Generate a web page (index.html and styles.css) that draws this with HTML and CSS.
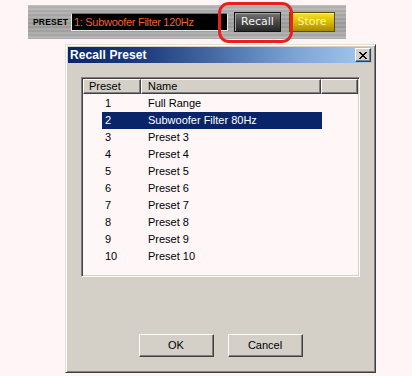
FILE: index.html
```html
<!DOCTYPE html>
<html>
<head>
<meta charset="utf-8">
<link rel="stylesheet" href="styles.css">
</head>
<body>
<div class="page">
  <div class="toolbar-wrap">
    <div class="toolbar">
      <span class="label">PRESET</span>
      <div class="display">1: Subwoofer Filter 120Hz</div>
      <div class="tbtn recall">Recall</div>
      <div class="tbtn store">Store</div>
    </div>
    <div class="ring"></div>
  </div>

  <div class="dialog">
    <div class="titlebar">
      <span class="title">Recall Preset</span>
      <div class="close">
        <svg width="8" height="7" viewBox="0 0 8 7"><path d="M0 0h2v1h-2zM6 0h2v1h-2zM1 1h2v1h-2zM5 1h2v1h-2zM2 2h4v1h-4zM3 3h2v1h-2zM2 4h4v1h-4zM1 5h2v1h-2zM5 5h2v1h-2zM0 6h2v1h-2zM6 6h2v1h-2z" fill="#000"/></svg>
      </div>
    </div>
    <div class="body">
      <div class="list">
        <div class="header">
          <div class="hcell h-preset">Preset</div>
          <div class="hcell h-name">Name</div>
          <div class="hcell h-fill"></div>
        </div>
        <div class="rows">
          <div class="row"><span class="num">1</span><span class="name">Full Range</span></div>
          <div class="row selected"><span class="num">2</span><span class="name">Subwoofer Filter 80Hz</span></div>
          <div class="row"><span class="num">3</span><span class="name">Preset 3</span></div>
          <div class="row"><span class="num">4</span><span class="name">Preset 4</span></div>
          <div class="row"><span class="num">5</span><span class="name">Preset 5</span></div>
          <div class="row"><span class="num">6</span><span class="name">Preset 6</span></div>
          <div class="row"><span class="num">7</span><span class="name">Preset 7</span></div>
          <div class="row"><span class="num">8</span><span class="name">Preset 8</span></div>
          <div class="row"><span class="num">9</span><span class="name">Preset 9</span></div>
          <div class="row"><span class="num">10</span><span class="name">Preset 10</span></div>
        </div>
      </div>
      <div class="buttons">
        <div class="wbtn">OK</div>
        <div class="wbtn">Cancel</div>
      </div>
    </div>
  </div>
</div>
</body>
</html>
```

FILE: styles.css
```css
html, body {
  margin: 0;
  padding: 0;
  background: #fff5f7;
}
.page {
  width: 412px;
  height: 376px;
  overflow: hidden;
  font-family: "Liberation Sans", Arial, sans-serif;
}

/* ---------- top toolbar ---------- */
.toolbar-wrap {
  position: relative;
  margin: 5px 0 0 28px;
  width: 318px;
  height: 34px;
}
.toolbar {
  box-sizing: border-box;
  width: 318px;
  height: 34px;
  display: flex;
  align-items: center;
  padding-left: 5px;
  background:
    repeating-linear-gradient(180deg, rgba(255,255,255,0.10) 0 1px, rgba(0,0,0,0.04) 1px 3px, rgba(255,255,255,0.06) 3px 4px),
    linear-gradient(180deg, #b9b9b9 0%, #a4a4a4 45%, #9d9d9d 60%, #b2b2b2 100%);
}
.label {
  font-size: 8.5px;
  font-weight: bold;
  letter-spacing: 0.2px;
  color: #000;
  width: 38px;
}
.display {
  box-sizing: border-box;
  width: 157px;
  height: 18px;
  background: #000;
  border: 1px solid #e6e6e6;
  border-top-color: #707070;
  color: #f0622e;
  font-size: 11px;
  letter-spacing: -0.3px;
  line-height: 16px;
  padding-left: 2px;
  white-space: nowrap;
  overflow: hidden;
}
.tbtn {
  box-sizing: border-box;
  height: 20px;
  font-family: "DejaVu Sans", sans-serif;
  font-size: 11px;
  line-height: 18px;
  text-align: center;
  border: 1px solid #111;
}
.recall {
  width: 47px;
  margin-left: 6px;
  color: #f4f4f4;
  background: linear-gradient(180deg, #7a7a7a 0%, #505050 40%, #262626 100%);
  box-shadow: inset 1px 1px 0 #a0a0a0;
}
.store {
  width: 46px;
  margin-left: 8px;
  color: #fbf3a8;
  border-color: #5a4a00;
  background: linear-gradient(180deg, #f6e030 0%, #e0c000 45%, #a88a00 100%);
  box-shadow: inset 1px 1px 0 #fff070;
}
.ring {
  position: absolute;
  left: 190px;
  top: -3px;
  width: 75px;
  height: 41px;
  box-sizing: border-box;
  border: 3px solid #ea1f1f;
  border-radius: 11px;
}

/* ---------- dialog ---------- */
.dialog {
  box-sizing: border-box;
  margin: 5px 0 0 65px;
  width: 311px;
  height: 329px;
  background: #d4d0c8;
  border: 1px solid;
  border-color: #e4e0d8 #404040 #404040 #e4e0d8;
  box-shadow: inset 1px 1px 0 #ffffff, inset -1px -1px 0 #808080;
  padding: 2px;
  display: flex;
  flex-direction: column;
}
.titlebar {
  height: 16px;
  margin-right: 1px;
  display: flex;
  align-items: center;
  justify-content: space-between;
  background: linear-gradient(90deg, #0a246a 0%, #1e3c7e 25%, #4a6eaa 50%, #7ea4d6 75%, #a6caf0 100%);
  padding-left: 2px;
}
.title {
  color: #fff;
  font-weight: bold;
  font-size: 12px;
  letter-spacing: 0.1px;
}
.close {
  box-sizing: border-box;
  width: 16px;
  height: 14px;
  margin-right: 1px;
  background: #d4d0c8;
  border: 1px solid;
  border-color: #ffffff #404040 #404040 #ffffff;
  box-shadow: inset -1px -1px 0 #808080;
  display: flex;
  align-items: center;
  justify-content: center;
}
.body {
  flex: 1;
  display: flex;
  flex-direction: column;
  padding: 14px 0 0 13px;
}

.list {
  box-sizing: border-box;
  width: 279px;
  height: 200px;
  background: #fff6f8;
  border: 1px solid;
  border-color: #808080 #ffffff #ffffff #808080;
  box-shadow: inset 1px 1px 0 #404040, inset -1px -1px 0 #d4d0c8;
  padding: 1px;
  font-size: 11px;
  color: #000;
}
.header {
  display: flex;
  height: 15px;
}
.hcell {
  box-sizing: border-box;
  height: 15px;
  background: #d4d0c8;
  border: 1px solid;
  border-color: #ffffff #404040 #404040 #ffffff;
  box-shadow: inset -1px -1px 0 #808080;
  line-height: 13px;
  padding-left: 5px;
  white-space: nowrap;
}
.h-preset { width: 58px; }
.h-name { width: 180px; padding-left: 6px; }
.h-fill { flex: 1; }

.rows {
  padding: 1px 0 0 19px;
}
.row {
  display: flex;
  width: 220px;
  height: 17px;
  line-height: 17px;
}
.row .num {
  width: 43px;
  padding-left: 3px;
}
.row.selected {
  background: #0a246a;
  color: #ffffff;
}

.buttons {
  margin-top: 57px;
  margin-left: -13px;
  display: flex;
  justify-content: center;
  gap: 14px;
}
.wbtn {
  box-sizing: border-box;
  width: 75px;
  height: 23px;
  background: #d4d0c8;
  border: 1px solid;
  border-color: #ffffff #404040 #404040 #ffffff;
  box-shadow: inset -1px -1px 0 #808080;
  font-size: 11px;
  line-height: 20px;
  text-align: center;
  color: #000;
}
```
